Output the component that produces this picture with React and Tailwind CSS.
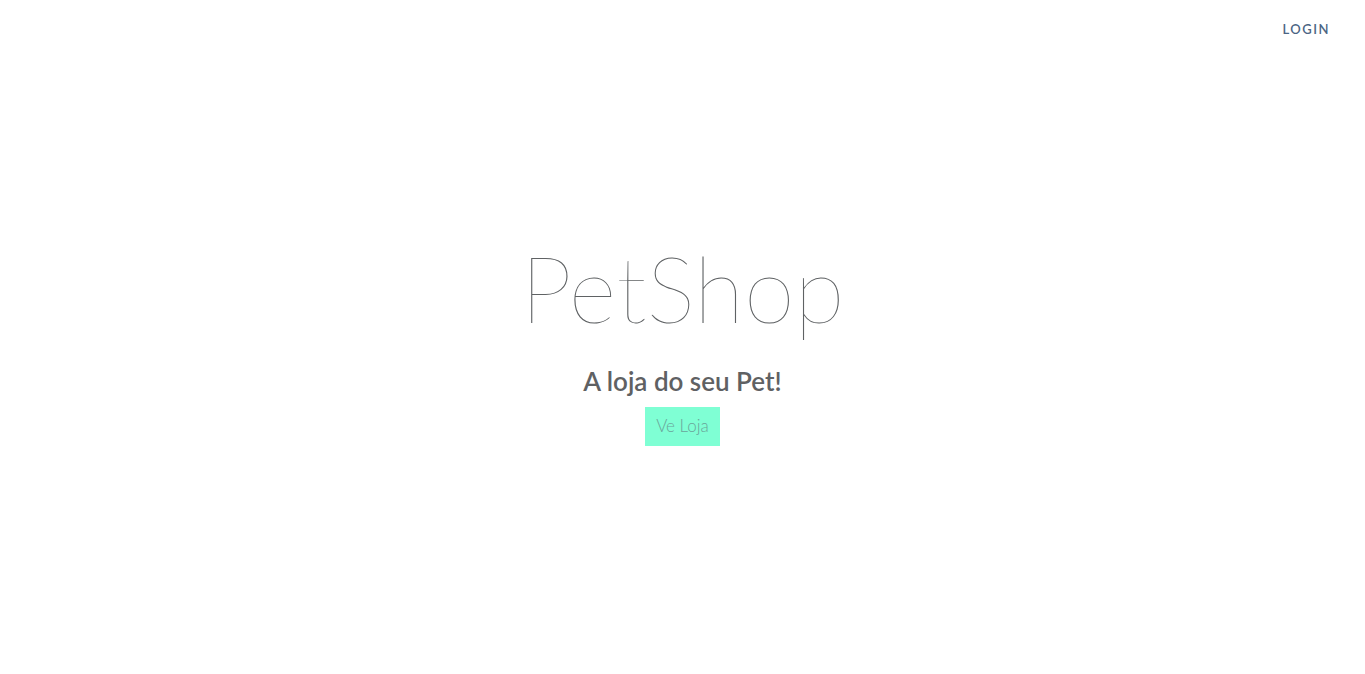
export default function App() {
  return (
    <div className="min-h-screen bg-white font-['Lato','Open_Sans',sans-serif] text-[#666]">
      <nav className="flex justify-end px-[35px] pt-[20px]">
        <a href="#" className="text-[13px] font-semibold tracking-[1.5px] text-[#4b6584]">LOGIN</a>
      </nav>

      <main className="flex flex-col items-center text-center pt-[198px]">
        <h1 className="text-[92px] font-thin leading-[100px] text-[#5f6264]">PetShop</h1>
        <h2 className="mt-[27px] text-[26px] font-semibold leading-[32px] text-[#5f6163]">A loja do seu Pet!</h2>
        <button className="mt-[10px] h-[39px] px-[11px] bg-[#7fffd4] text-[17px] font-light text-[#6aa69a]">Ve Loja</button>
      </main>
    </div>
  );
}
